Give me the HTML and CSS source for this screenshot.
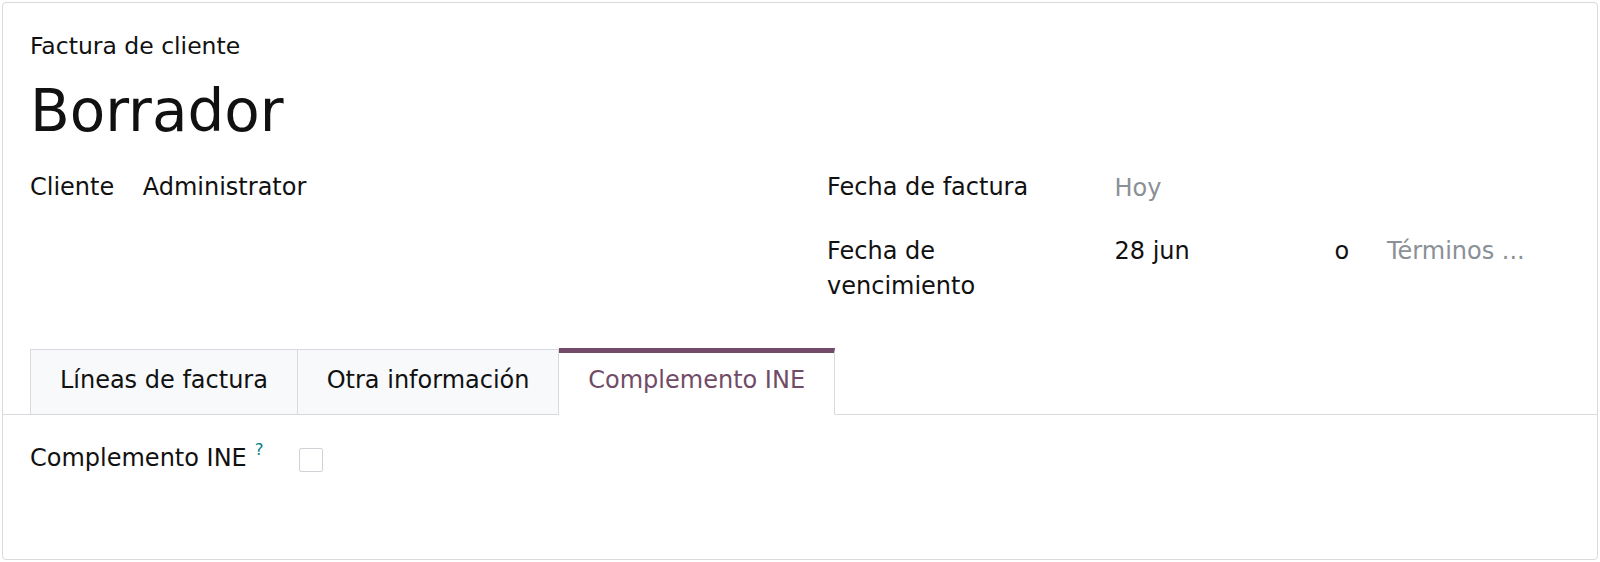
FILE: index.html
```html
<!DOCTYPE html>
<html lang="es">
<head>
<meta charset="utf-8">
<title>Factura de cliente</title>
<link rel="stylesheet" href="styles.css">
</head>
<body>
<div class="sheet">
  <div class="header">
    <div class="subtitle">Factura de cliente</div>
    <h1 class="title">Borrador</h1>
    <div class="groups">
      <div class="group group-left">
        <div class="label">Cliente</div>
        <div class="value">Administrator</div>
      </div>
      <div class="group group-right">
        <div class="label">Fecha de factura</div>
        <div class="value placeholder hoy">Hoy</div>
        <div class="label">Fecha de vencimiento</div>
        <div class="value due">
          <span class="date">28 jun</span>
          <span class="or">o</span>
          <span class="placeholder terms">Términos ...</span>
        </div>
      </div>
    </div>
  </div>
  <div class="tabs">
    <div class="tab">Líneas de factura</div>
    <div class="tab">Otra información</div>
    <div class="tab active">Complemento INE</div>
  </div>
  <div class="tab-pane">
    <div class="check-row">
      <div class="check-label">Complemento INE<sup class="help">?</sup></div>
      <div class="check-cell"><span class="checkbox"></span></div>
    </div>
  </div>
</div>
</body>
</html>
```

FILE: styles.css
```css
html, body {
  margin: 0;
  padding: 0;
  background: #ffffff;
}
body {
  padding: 2px;
  font-family: "DejaVu Sans", "Liberation Sans", sans-serif;
  font-size: 24px;
  line-height: 35px;
  color: #111111;
}
.sheet {
  box-sizing: border-box;
  height: 558px;
  border: 1px solid #d8dadd;
  border-radius: 4px;
  background: #ffffff;
  overflow: hidden;
}
.header {
  padding: 26px 27px 0 27px;
}
.subtitle {
  height: 35px;
  font-size: 23.5px;
}
.title {
  margin: 12px 0 0 0;
  font-size: 58px;
  line-height: 70px;
  font-weight: normal;
}
.groups {
  display: flex;
  margin-top: 24px;
}
.group {
  display: grid;
  row-gap: 29px;
  align-content: start;
}
.group-left {
  width: 797px;
  grid-template-columns: 112.7px 1fr;
}
.group-right {
  flex: 1;
  grid-template-columns: 287.5px 1fr;
}
.group-right .label {
  padding-right: 58px;
}
.placeholder {
  color: #8b9096;
}
.hoy {
  position: relative;
  top: 1px;
}
.due {
  display: flex;
}
.date {
  width: 220px;
}
.terms {
  margin-left: 37.8px;
}
.tabs {
  display: flex;
  align-items: flex-end;
  margin-top: 45px;
  padding-left: 27px;
  border-bottom: 1px solid #d8dadd;
  height: 65px;
}
.tab {
  padding: 12.5px 28.9px 16.5px 28.9px;
  border: 1px solid #d8dadd;
  border-left: none;
  margin-bottom: -1px;
  background: #f8f9fa;
  white-space: nowrap;
}
.tab:first-child {
  border-left: 1px solid #d8dadd;
}
.tab.active {
  background: #ffffff;
  color: #714b67;
  border-top: 5px solid #714b67;
  border-bottom-color: #ffffff;
  padding-top: 9.5px;
}
.tab-pane {
  padding: 26px 27px 0 27px;
}
.check-row {
  display: grid;
  grid-template-columns: 269.3px 1fr;
}
.check-label {
  white-space: nowrap;
}
.help {
  color: #017e84;
  font-size: 16.5px;
  line-height: 0;
  margin-left: 8px;
  vertical-align: 0;
  position: relative;
  top: -11px;
}
.check-cell {
  display: flex;
  align-items: flex-start;
  padding-top: 7.3px;
}
.checkbox {
  box-sizing: border-box;
  width: 23.4px;
  height: 23.4px;
  border: 1px solid #cfd2d6;
  border-radius: 2px;
  background: #ffffff;
}
```
